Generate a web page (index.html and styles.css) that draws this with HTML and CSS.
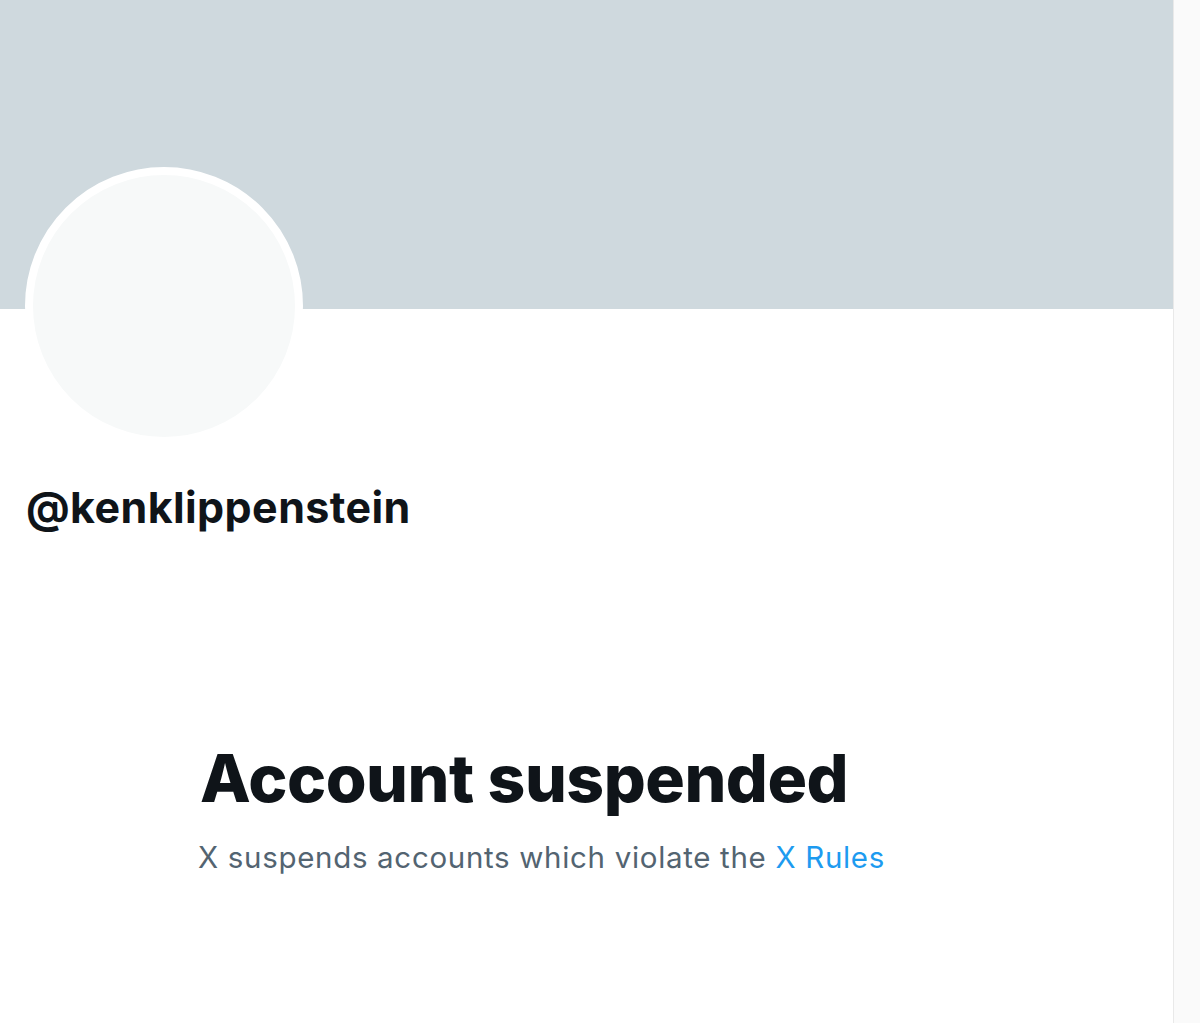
FILE: index.html
```html
<!DOCTYPE html>
<html lang="en">
<head>
    <meta charset="UTF-8">
    <title>@kenklippenstein</title>
    <link rel="stylesheet" href="styles.css">
</head>
<body>
<div class="page">
    <div class="main">
        <div class="banner"></div>
        <div class="profile">
            <div class="avatar"></div>
            <h2 class="handle">@kenklippenstein</h2>
        </div>
        <div class="notice">
            <h1>Account suspended</h1>
            <p>X suspends accounts which violate the <a href="#">X Rules</a></p>
        </div>
    </div>
    <div class="gutter"></div>
</div>
</body>
</html>
```
FILE: styles.css
```css
body, h1, h2, p {
    margin: 0;
    padding: 0;
}

body {
    background: #fff;
    font-family: Inter, "Noto Sans", sans-serif;
    color: #0f1419;
}

.page {
    display: flex;
    min-height: 1023px;
}

.main {
    width: 1173px;
}

.gutter {
    flex: 1;
    background: #fafafa;
    border-left: 1px solid #e9e9e9;
}

.banner {
    height: 309px;
    background: #cfd9de;
}

.profile {
    padding-left: 25px;
}

.avatar {
    width: 262px;
    height: 262px;
    margin-top: -142px;
    border: 8.5px solid #fff;
    border-radius: 50%;
    background: #f7f9f9;
}

.handle {
    margin-top: 38px;
    padding-left: 1px;
    font-size: 43px;
    font-weight: 700;
    line-height: 48px;
    letter-spacing: 0.4px;
}

.notice {
    padding: 209px 0 0 198px;
}

.notice h1 {
    padding-left: 2px;
    font-size: 66px;
    font-weight: 800;
    line-height: 76px;
    letter-spacing: -0.5px;
}

.notice p {
    margin-top: 23px;
    font-size: 29.5px;
    line-height: 36px;
    letter-spacing: 0.68px;
    color: #536471;
}

.notice a {
    color: #1d9bf0;
    text-decoration: none;
}
```
